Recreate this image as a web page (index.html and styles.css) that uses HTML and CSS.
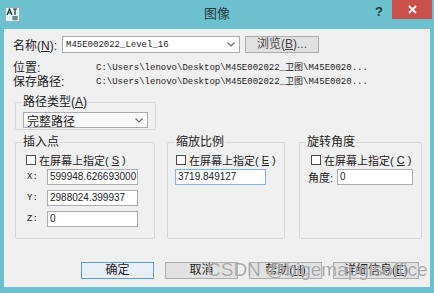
FILE: index.html
```html
<!DOCTYPE html>
<html lang="zh-CN">
<head>
    <meta charset="UTF-8">
    <title>图像</title>
    <link rel="stylesheet" href="styles.css">
</head>
<body>
    <div class="window">
        <div class="titlebar">
            <div class="left">
                <svg class="app-icon" width="15" height="15" viewBox="0 0 15 15">
                    <rect x="0.5" y="0.5" width="14" height="14" fill="#e4f2f4" stroke="#8fb7bf"/>
                    <path d="M2 8 L4.5 2 L7 8 M3 6 H6" fill="none" stroke="#1c2c30" stroke-width="1.2"/>
                    <path d="M8 2 H12 M10 2 V8" fill="none" stroke="#1c2c30" stroke-width="1.2"/>
                    <path d="M7 10 H13 M7 12 H13 M9 9 V13.5 M11 9 V13.5" fill="none" stroke="#3b5a60" stroke-width="0.9"/>
                </svg>
            </div>
            <div class="title">图像</div>
            <div class="controls">
                <span class="help">?</span>
                <span class="close">
                    <svg width="9" height="9" viewBox="0 0 9 9">
                        <path d="M1 1 L8 8 M8 1 L1 8" stroke="#fff" stroke-width="1.8"/>
                    </svg>
                </span>
            </div>
        </div>

        <div class="client">
            <div class="name-row">
                <span class="lbl">名称(<u>N</u>):</span>
                <div class="combo name-combo">
                    <span class="txt">M45E002022_Level_16</span>
                    <span class="arrow">
                        <svg width="8" height="5" viewBox="0 0 8 5"><path d="M0.5 0.5 L4 4 L7.5 0.5" fill="none" stroke="#6a6a6a" stroke-width="1.1"/></svg>
                    </span>
                </div>
                <button class="btn browse">浏览(<u>B</u>)...</button>
            </div>

            <div class="info first">
                <span class="lbl">位置:</span>
                <span class="path">C:\Users\lenovo\Desktop\M45E002022_卫图\M45E0020...</span>
            </div>
            <div class="info">
                <span class="lbl">保存路径:</span>
                <span class="path">C:\Users\lenovo\Desktop\M45E002022_卫图\M45E0020...</span>
            </div>

            <fieldset class="group path-group">
                <legend>路径类型(<u>A</u>)</legend>
                <div class="combo list-combo">
                    <span class="txt">完整路径</span>
                    <span class="arrow">
                        <svg width="8" height="5" viewBox="0 0 8 5"><path d="M0.5 0.5 L4 4 L7.5 0.5" fill="none" stroke="#6a6a6a" stroke-width="1.1"/></svg>
                    </span>
                </div>
            </fieldset>

            <div class="groups">
                <fieldset class="group insert-group">
                    <legend>插入点</legend>
                    <div class="check"><span class="box"></span>在屏幕上指定(<u>S</u>)</div>
                    <div class="coord"><span class="axis">X:</span><span class="field">599948.626693000</span></div>
                    <div class="coord"><span class="axis">Y:</span><span class="field">2988024.399937</span></div>
                    <div class="coord"><span class="axis">Z:</span><span class="field">0</span></div>
                </fieldset>

                <fieldset class="group scale-group">
                    <legend>缩放比例</legend>
                    <div class="check"><span class="box"></span>在屏幕上指定(<u>E</u>)</div>
                    <div class="coord"><span class="field active">3719.849127</span></div>
                </fieldset>

                <fieldset class="group rotate-group">
                    <legend>旋转角度</legend>
                    <div class="check"><span class="box"></span>在屏幕上指定(<u>C</u>)</div>
                    <div class="coord"><span class="axis">角度:</span><span class="field">0</span></div>
                </fieldset>
            </div>

            <div class="actions">
                <button class="btn default">确定</button>
                <button class="btn">取消</button>
                <button class="btn">帮助(<u>H</u>)</button>
                <button class="btn wide">详细信息(<u>E</u>)</button>
            </div>
        </div>

        <div class="watermark">CSDN @bigemapgisoffice</div>
    </div>
</body>
</html>
```

FILE: styles.css
```css
* {
    margin: 0;
    padding: 0;
    box-sizing: border-box;
}

body {
    width: 434px;
    height: 293px;
    overflow: hidden;
    background: #6dc1cf;
    font-family: "Liberation Sans", "Noto Sans CJK SC", sans-serif;
    font-size: 12px;
    color: #222;
}

.window {
    position: relative;
    width: 434px;
    height: 293px;
}

/* Title bar */
.titlebar {
    display: grid;
    grid-template-columns: 1fr auto 1fr;
    height: 29px;
}

.app-icon {
    display: block;
    margin: 7px 0 0 5px;
}

.title {
    font-size: 13px;
    line-height: 28px;
    color: #263a40;
}

.controls {
    display: flex;
    justify-content: flex-end;
    align-items: flex-start;
}

.help {
    font-weight: bold;
    font-size: 13px;
    margin: 4px 9px 0 0;
    color: #22363c;
}

.close {
    display: flex;
    align-items: center;
    justify-content: center;
    width: 40px;
    height: 19px;
    margin-right: 2px;
    background: #c9504b;
}

/* Client area */
.client {
    margin: 0 4px;
    height: 258px;
    padding-top: 7px;
    background: #f0f0f0;
}

.name-row {
    display: flex;
    align-items: center;
    height: 17px;
    padding-left: 9px;
}

.name-row .lbl {
    width: 49px;
}

.combo {
    display: flex;
    align-items: center;
    height: 17px;
    padding-left: 3px;
    border: 1px solid #abadb3;
    background: #fff;
}

.combo .txt {
    flex: 1;
}

.combo .arrow {
    display: flex;
    justify-content: center;
    width: 17px;
}

.name-combo {
    width: 178px;
    font-family: "Liberation Mono", "Noto Sans CJK SC", monospace;
    font-size: 9px;
}

.btn {
    height: 17px;
    border: 1px solid #adadad;
    background: #e1e1e1;
    font-family: "Liberation Sans", "Noto Sans CJK SC", sans-serif;
    font-size: 12px;
    line-height: 15px;
    color: #222;
}

.browse {
    width: 74px;
    margin-left: 5px;
    color: #444;
}

.info {
    display: flex;
    align-items: center;
    height: 14px;
    padding-left: 9px;
}

.info.first {
    margin-top: 6px;
}

.info .lbl {
    width: 83px;
}

.path {
    font-family: "Liberation Mono", "Noto Sans CJK SC", monospace;
    font-size: 9px;
}

/* Group boxes */
.group {
    border: 1px solid #d6d6d6;
    border-radius: 2px;
    padding: 0 6px;
}

.group legend {
    line-height: 14px;
    padding: 0 1px;
}

.path-group {
    width: 141px;
    margin: 8px 0 0 11px;
    padding-bottom: 1px;
}

.list-combo {
    width: 125px;
    height: 16px;
    margin: 3px 0 0 1px;
    background: #fbfbfb;
}

.groups {
    display: flex;
    margin-top: 5px;
    padding-left: 11px;
}

.groups .group {
    height: 104px;
}

.insert-group {
    width: 140px;
}

.scale-group {
    width: 118px;
    margin-left: 12px;
    padding: 0 7px;
}

.rotate-group {
    width: 123px;
    margin-left: 14px;
}

.check {
    display: flex;
    align-items: center;
    gap: 3px;
    height: 14px;
    margin-top: 4px;
    font-size: 11px;
    white-space: nowrap;
}

.box {
    flex: none;
    width: 10px;
    height: 10px;
    border: 1px solid #4a4a4a;
    background: #fff;
}

.insert-group .check { margin-left: 4px; }
.scale-group .check { margin-left: 1px; }
.rotate-group .check { margin-left: 5px; }

.coord {
    display: flex;
    align-items: center;
    height: 16px;
    margin-top: 5px;
}

.check + .coord {
    margin-top: 2px;
}

.axis {
    width: 25px;
    padding-left: 5px;
    font-family: "Liberation Mono", monospace;
    font-size: 9px;
}

.field {
    width: 91px;
    height: 16px;
    padding-left: 2px;
    border: 1px solid #abadb3;
    background: #fff;
    font-size: 10px;
    line-height: 14px;
    white-space: nowrap;
    overflow: hidden;
}

.field.active {
    border-color: #7eb4ea;
}

.rotate-group .axis {
    width: 31px;
    padding-left: 2px;
    font-family: "Liberation Sans", "Noto Sans CJK SC", sans-serif;
    font-size: 11px;
}

.rotate-group .field {
    width: 76px;
}

/* Bottom buttons */
.actions {
    display: flex;
    justify-content: flex-end;
    gap: 11px;
    margin-top: 23px;
    padding-right: 11px;
}

.actions .btn {
    width: 73px;
}

.actions .btn.wide {
    width: 86px;
}

.actions .btn.default {
    border-color: #5d9bd3;
    background: #e8eff6;
}

/* CSDN watermark over the buttons */
.watermark {
    position: absolute;
    left: 207px;
    top: 259px;
    font-size: 19px;
    color: rgba(110, 110, 110, 0.6);
    text-shadow: 0 0 1px #fff;
    white-space: nowrap;
}
```
